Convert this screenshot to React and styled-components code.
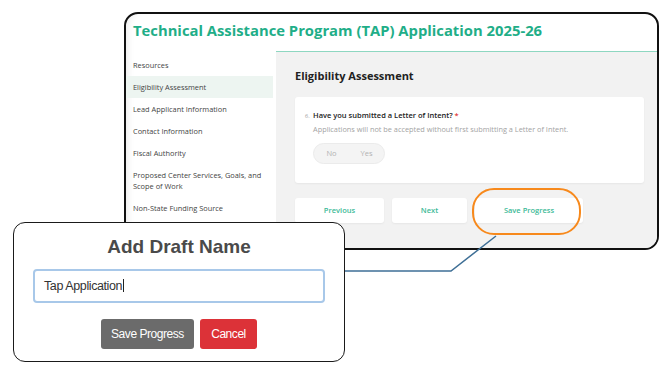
import React from "react";
import styled, { createGlobalStyle } from "styled-components";

const GlobalStyle = createGlobalStyle`
  html, body { margin: 0; padding: 0; background: #fff; }
  body { width: 670px; height: 379px; overflow: hidden; font-family: "Open Sans", "Liberation Sans", sans-serif; }
  * { box-sizing: border-box; }
`;

const Stage = styled.div`
  position: relative;
  width: 670px;
  height: 379px;
  background: #fff;
`;

const MainWindow = styled.div`
  position: absolute;
  left: 124px;
  top: 12px;
  width: 535px;
  height: 238px;
  border: 2px solid #111;
  border-radius: 14px;
  overflow: hidden;
  background: #fff;
  display: flex;
  flex-direction: column;
  box-shadow: inset 6px 0 8px -6px rgba(0, 0, 0, 0.12);
`;

const Header = styled.div`
  flex: none;
  height: 37px;
  display: flex;
  align-items: center;
  padding: 0 0 5px 7px;
`;

const Title = styled.h1`
  margin: 0;
  font-size: 14.8px;
  font-weight: 700;
  color: #1fae88;
  white-space: nowrap;
`;

const Body = styled.div`
  flex: 1;
  display: flex;
  min-height: 0;
`;

const Sidebar = styled.nav`
  flex: none;
  width: 147px;
  margin-right: 3px;
  padding-top: 3px;
`;

const NavItem = styled.div`
  padding: 5.5px 6px 5.5px 7px;
  font-size: 7.4px;
  line-height: 11px;
  color: #444;
  background: ${(p) => (p.$active ? "#edf5f1" : "transparent")};
`;

const Content = styled.main`
  flex: 1;
  background: #f2f2f2;
  border-top: 1.5px solid #8ed7c1;
  padding: 16px 13px 0 19px;
`;

const SectionHeading = styled.h2`
  margin: 0 0 13.5px;
  font-size: 11px;
  line-height: 15px;
  font-weight: 700;
  color: #222;
`;

const Card = styled.div`
  background: #fff;
  border-radius: 3px;
  box-shadow: 0 1px 2px rgba(0, 0, 0, 0.05);
  padding: 13.5px 10px 19px 10px;
  display: flex;
`;

const QNum = styled.span`
  flex: none;
  width: 8px;
  font-size: 5.5px;
  line-height: 11px;
  padding-top: 1px;
  color: #9a9a9a;
`;

const QBody = styled.div`
  display: flex;
  flex-direction: column;
  align-items: flex-start;
`;

const Question = styled.div`
  font-size: 7.5px;
  line-height: 11px;
  font-weight: 600;
  color: #222;
`;

const Required = styled.span`
  color: #e23b3b;
`;

const Description = styled.div`
  margin-top: 3px;
  font-size: 7.35px;
  line-height: 11px;
  color: #a3a3a3;
`;

const Pill = styled.div`
  margin-top: 7.5px;
  width: 72px;
  height: 21px;
  border-radius: 11px;
  background: #f4f4f4;
  border: 1px solid #ebebeb;
  display: flex;
`;

const PillOption = styled.span`
  flex: 1;
  display: flex;
  align-items: center;
  justify-content: center;
  font-size: 7.5px;
  color: #b3b3b3;
`;

const ButtonRow = styled.div`
  margin-top: 15px;
  display: flex;
  gap: 8px;
`;

const NavButton = styled.button`
  position: relative;
  width: ${(p) => p.$w}px;
  height: 25px;
  border: none;
  border-radius: 3px;
  background: #fff;
  box-shadow: 0 1px 2px rgba(0, 0, 0, 0.05);
  font-family: "Open Sans", sans-serif;
  font-size: 7.5px;
  font-weight: 600;
  color: #3dba97;
  padding: 0;
`;

const Ring = styled.span`
  position: absolute;
  left: -3px;
  top: -10px;
  width: 109px;
  height: 47px;
  border: 2.8px solid #f7891c;
  border-radius: 22px;
  pointer-events: none;
`;

const Connector = styled.svg`
  position: absolute;
  left: 0;
  top: 0;
  pointer-events: none;
`;

const Modal = styled.div`
  position: absolute;
  left: 13px;
  top: 222px;
  width: 332px;
  height: 140px;
  border: 1.5px solid #1a1a1a;
  border-radius: 12px;
  background: #fff;
  display: flex;
  flex-direction: column;
  align-items: center;
  padding-top: 13px;
  font-family: "Liberation Sans", Arial, sans-serif;
`;

const ModalTitle = styled.h3`
  margin: 0;
  font-size: 19px;
  line-height: 22px;
  font-weight: 700;
  color: #4a4a4a;
`;

const DraftInput = styled.div`
  margin-top: 10.5px;
  width: 292px;
  height: 34px;
  border: 2px solid #a8c8e9;
  border-radius: 4px;
  padding-left: 9px;
  display: flex;
  align-items: center;
  font-size: 12.5px;
  letter-spacing: -0.4px;
  color: #333;
`;

const Caret = styled.span`
  display: inline-block;
  width: 1px;
  height: 13px;
  margin-left: 1px;
  background: #222;
`;

const ModalActions = styled.div`
  margin-top: 16px;
  display: flex;
  gap: 6px;
`;

const ModalButton = styled.button`
  width: ${(p) => p.$w}px;
  height: 30px;
  border: none;
  border-radius: 3px;
  padding: 0;
  background: ${(p) => (p.$variant === "danger" ? "#dc3238" : "#6b6b6b")};
  color: #fff;
  font-family: "Liberation Sans", Arial, sans-serif;
  font-size: 12px;
  letter-spacing: -0.45px;
`;

const navItems = [
  "Resources",
  "Eligibility Assessment",
  "Lead Applicant Information",
  "Contact Information",
  "Fiscal Authority",
  "Proposed Center Services, Goals, and|Scope of Work",
  "Non-State Funding Source",
];

export default function App() {
  return (
    <Stage>
      <GlobalStyle />
      <MainWindow>
        <Header>
          <Title>Technical Assistance Program (TAP) Application 2025-26</Title>
        </Header>
        <Body>
          <Sidebar>
            {navItems.map((item) => {
              const parts = item.split("|");
              return (
                <NavItem key={item} $active={item === "Eligibility Assessment"}>
                  {parts[0]}
                  {parts[1] && (
                    <>
                      <br />
                      {parts[1]}
                    </>
                  )}
                </NavItem>
              );
            })}
          </Sidebar>
          <Content>
            <SectionHeading>Eligibility Assessment</SectionHeading>
            <Card>
              <QNum>6.</QNum>
              <QBody>
                <Question>
                  Have you submitted a Letter of Intent? <Required>*</Required>
                </Question>
                <Description>
                  Applications will not be accepted without first submitting a Letter of Intent.
                </Description>
                <Pill>
                  <PillOption>No</PillOption>
                  <PillOption>Yes</PillOption>
                </Pill>
              </QBody>
            </Card>
            <ButtonRow>
              <NavButton $w={89}>Previous</NavButton>
              <NavButton $w={75}>Next</NavButton>
              <NavButton $w={108}>
                Save Progress
                <Ring />
              </NavButton>
            </ButtonRow>
          </Content>
        </Body>
      </MainWindow>
      <Connector width="670" height="379" viewBox="0 0 670 379">
        <polyline
          points="496,236 451,271 340,271"
          fill="none"
          stroke="#3e6f96"
          strokeWidth="1.5"
        />
      </Connector>
      <Modal>
        <ModalTitle>Add Draft Name</ModalTitle>
        <DraftInput>
          Tap Application
          <Caret />
        </DraftInput>
        <ModalActions>
          <ModalButton $w={93}>Save Progress</ModalButton>
          <ModalButton $w={57} $variant="danger">
            Cancel
          </ModalButton>
        </ModalActions>
      </Modal>
    </Stage>
  );
}
